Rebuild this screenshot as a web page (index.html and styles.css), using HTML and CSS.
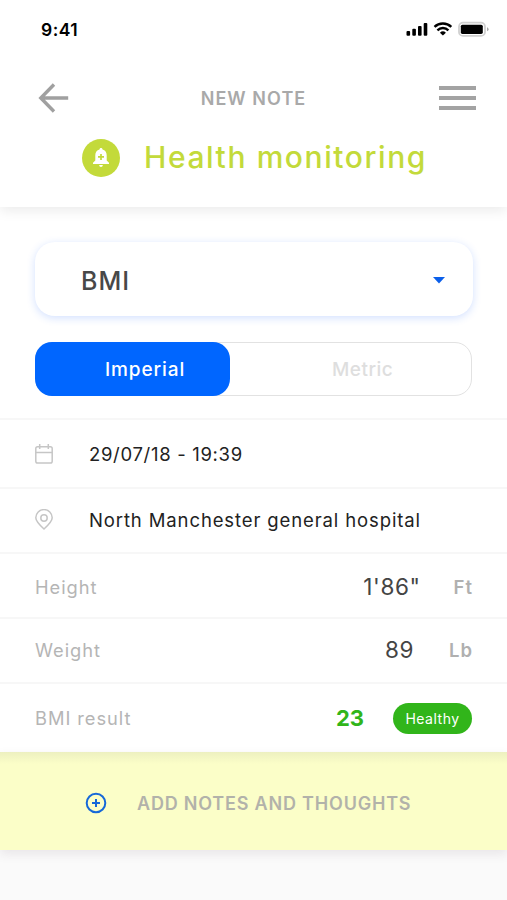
FILE: index.html
```
<!DOCTYPE html>
<html lang="en">
<head>
<meta charset="utf-8">
<title>New note</title>
<link rel="stylesheet" href="styles.css">
</head>
<body>
<header class="header">
  <div class="status">
    <span class="time">9:41</span>
    <svg class="status-icons" width="84" height="18" viewBox="0 0 84 18">
      <g fill="#000"><rect x="1.5" y="11" width="3.600" height="4.700" rx="1"/><rect x="7.300" y="8.700" width="3.600" height="7" rx="1"/><rect x="13" y="6" width="3.600" height="9.700" rx="1"/><rect x="18.700" y="3" width="3.600" height="12.700" rx="1"/></g>
      <g fill="none" stroke="#000" stroke-width="2.400"><path d="M29.500 6.800a12.200 12.200 0 0 1 16.800 0"/><path d="M32.400 10.300a7.900 7.900 0 0 1 11 0"/></g>
      <path d="M34.900 12.700a4.300 4.300 0 0 1 6 0l-3 2.900z"/>
      <rect x="54" y="2.700" width="26" height="13.200" rx="4" fill="#fff" stroke="#d0d0d0" stroke-width="1.800"/><rect x="55.800" y="4.700" width="22" height="9.200" rx="1.600"/><path d="M82 7.300v4q1.600-.6 1.600-2t-1.600-2z" fill="#aaa"/>
    </svg>
  </div>
  <nav class="nav">
    <svg width="32" height="30" viewBox="0 0 32 30" fill="none" stroke="#a0a0a0" stroke-width="3.400"><path d="M30.200 15H3M16 1.500 2.800 15 16 28.500"/></svg>
    <span class="nav-title">NEW NOTE</span>
    <span class="menu"><i></i><i></i><i></i></span>
  </nav>
  <div class="heading">
    <span class="bell"><svg width="18" height="20" viewBox="0 0 18 20"><path fill="#fff" d="M9 0c1 0 1.500.6 1.500 1.600 2.700.7 4.200 2.800 4.200 5.600v5.300l2.300 2.200v1.300H1v-1.300l2.300-2.200V7.200c0-2.800 1.500-4.900 4.200-5.600C7.500.6 8 0 9 0zM7.200 17h3.600c0 1.200-.8 1.900-1.800 1.900S7.200 18.200 7.200 17z"/><path d="M9 5.900v6M6 8.900h6" stroke="#c3da3a" stroke-width="1.700"/></svg></span>
    <h1 class="title">Health monitoring</h1>
  </div>
</header>
<main>
  <div class="select"><span class="select-text">BMI</span><svg width="12" height="7" viewBox="0 0 12 7"><path fill="#0b5fea" d="M0 0h12L6 6.500z"/></svg></div>
  <div class="toggle"><span class="on">Imperial</span><span class="off">Metric</span></div>
  <section class="rows">
    <div class="row r1"><svg width="18" height="20" viewBox="0 0 18 20" fill="none" stroke="#c6c6c6" stroke-width="1.500"><rect x=".8" y="2.800" width="16.400" height="16.200" rx="1.800"/><path d="M.8 8.500h16.400M4.700 0v5M13.300 0v5"/></svg><span class="info date">29/07/18 - 19:39</span></div>
    <div class="row r2"><svg width="18" height="21" viewBox="0 0 18 21" fill="none" stroke="#c6c6c6" stroke-width="1.500"><path d="M9 20C4 15.500.8 12.200.8 8.800a8.200 8.200 0 0 1 16.400 0C17.200 12.200 14 15.500 9 20z"/><circle cx="9" cy="9" r="3.200"/></svg><span class="info place">North Manchester general hospital</span></div>
    <div class="row r3"><span class="label">Height</span><span class="value">1'86"</span><span class="unit">Ft</span></div>
    <div class="row r4"><span class="label">Weight</span><span class="value">89</span><span class="unit">Lb</span></div>
    <div class="row r5"><span class="label">BMI result</span><span class="result">23</span><span class="pill">Healthy</span></div>
  </section>
</main>
<div class="notes"><svg width="22" height="22" viewBox="0 0 22 22" fill="none" stroke="#1668d8" stroke-width="2"><circle cx="11" cy="11" r="9.300"/><path d="M11 7v8M7 11h8"/></svg><span class="notes-text">ADD NOTES AND THOUGHTS</span></div>
</body>
</html>
```
FILE: styles.css
```
* { box-sizing: border-box; }
body { margin: 0; height: 900px; overflow: hidden; background: #fafafa; font-family: Inter, "Liberation Sans", sans-serif; color: #222; }
svg { display: block; flex: none; }
span, h1 { white-space: nowrap; }
.header { position: relative; height: 207px; background: #fff; box-shadow: 0 4px 12px rgba(0,0,0,.08); }
.status { display: flex; justify-content: space-between; align-items: center; height: 58px; padding: 0 18px 0 41px; }
.time { font-size: 17.500px; font-weight: 600; letter-spacing: .5px; color: #000; }
.nav { display: flex; align-items: center; justify-content: space-between; height: 79px; padding: 0 31px 0 38px; }
.nav-title { margin-right: 2px; padding-top: 2px; font-size: 18px; font-weight: 600; letter-spacing: 1.050px; color: #a9a9a9; }
.menu { display: flex; flex-direction: column; gap: 6px; width: 37px; }
.menu i { height: 4px; background: #a3a3a3; }
.heading { display: flex; align-items: center; height: 42px; padding-left: 82px; }
.bell { display: flex; align-items: center; justify-content: center; width: 38px; height: 38px; border-radius: 50%; background: #c3da3a; }
.title { margin: -2px 0 0 24px; font-size: 30px; font-weight: 500; letter-spacing: 1.580px; color: #c3da3a; }
main { height: 545px; padding-top: 35px; background: #fff; }
.select { display: flex; align-items: center; justify-content: space-between; width: 438px; height: 74px; margin-left: 35px; padding: 3px 28px 0 46px; border-radius: 20px; background: #fff; box-shadow: 0 2px 9px rgba(30,100,255,.2); }
.select-text { font-size: 25px; font-weight: 500; letter-spacing: 1px; color: #484848; }
.toggle { display: flex; width: 437px; height: 54px; margin: 26px 0 0 35px; border: 1px solid #e2e2e2; border-radius: 17px; font-size: 19px; font-weight: 500; }
.on { width: 195px; margin: -1px 0 -1px -1px; padding: 1px 0 0 70px; line-height: 54px; letter-spacing: .9px; border-radius: 17px; background: #06f; color: #fff; }
.off { padding: 1px 0 0 102px; line-height: 52px; letter-spacing: .5px; color: #dedede; }
.rows { margin-top: 22px; }
.row { display: flex; align-items: center; padding: 0 35px; border-top: 2px solid #f7f7f7; }
.r1 { height: 69px; }
.r2 { height: 65px; padding-bottom: 2px; }
.r3 { height: 65px; padding-top: 3px; }
.r4 { height: 65px; padding-bottom: 2px; }
.r5 { height: 69px; padding-top: 1px; }
.info { margin-left: 36px; font-size: 18.500px; color: #222; }
.date { letter-spacing: .68px; }
.place { letter-spacing: .88px; }
.label { margin-right: auto; font-size: 18.300px; letter-spacing: .95px; color: #b5b5b5; }
.value { font-size: 22.500px; letter-spacing: .6px; color: #444; }
.r3 .value { margin-top: -2px; }
.r4 .value { margin-top: -1px; }
.unit { margin: 0 -1px 0 33px; font-size: 18.500px; font-weight: 600; letter-spacing: 1px; color: #b0b0b0; }
.r4 .unit { margin-left: 35px; }
.result { font-size: 22px; font-weight: 700; color: #31b51a; }
.pill { display: flex; align-items: center; justify-content: center; width: 79px; height: 31px; margin-left: 29px; border-radius: 16px; background: #31b51a; font-size: 14px; letter-spacing: .5px; color: #fff; }
.notes { display: flex; align-items: center; height: 98px; padding: 4px 0 0 85px; background: linear-gradient(#edf0c0, #fbfec8 12px); box-shadow: 0 4px 10px rgba(80,50,80,.1); }
.notes-text { margin-left: 30px; font-size: 18px; font-weight: 600; letter-spacing: .8px; color: #b2b2aa; }
```
